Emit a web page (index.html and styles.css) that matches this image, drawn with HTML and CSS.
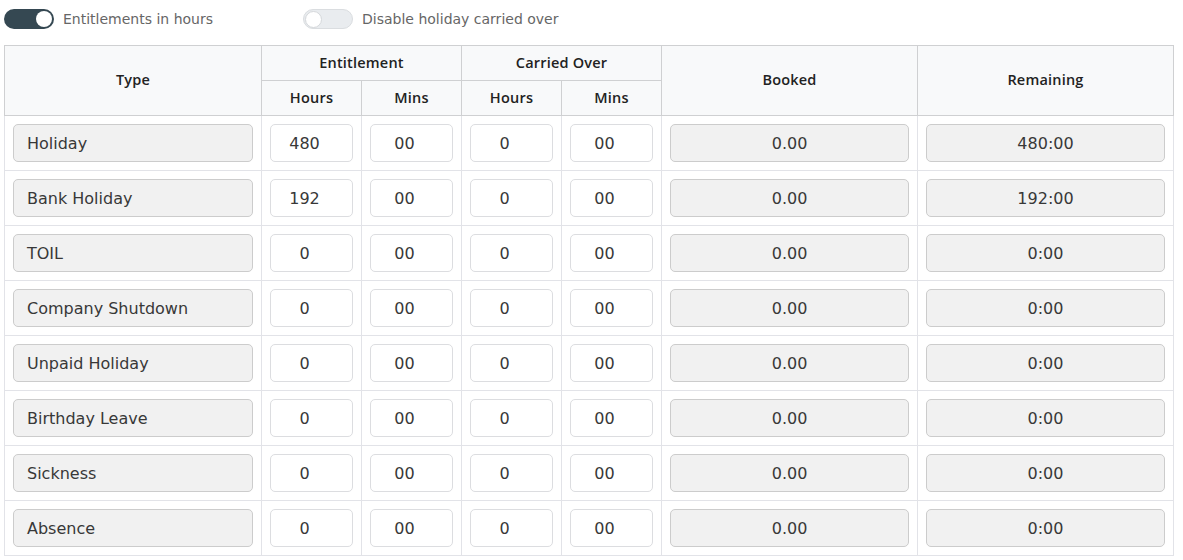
FILE: index.html
```html
<!DOCTYPE html>
<html>
<head>
<meta charset="utf-8">
<link rel="stylesheet" href="styles.css">
</head>
<body>
<div class="page">
  <div class="toggles">
    <label class="toggle-item">
      <span class="switch on"><span class="knob"></span></span>
      <span class="toggle-label">Entitlements in hours</span>
    </label>
    <label class="toggle-item second">
      <span class="switch off"><span class="knob"></span></span>
      <span class="toggle-label">Disable holiday carried over</span>
    </label>
  </div>
  <table class="ent">
    <colgroup>
      <col class="c-type"><col class="c-num"><col class="c-num"><col class="c-num"><col class="c-num"><col class="c-wide"><col class="c-wide">
    </colgroup>
    <thead>
      <tr class="h1">
        <th rowspan="2">Type</th>
        <th colspan="2">Entitlement</th>
        <th colspan="2">Carried Over</th>
        <th rowspan="2">Booked</th>
        <th rowspan="2">Remaining</th>
      </tr>
      <tr class="h2">
        <th>Hours</th><th>Mins</th><th>Hours</th><th>Mins</th>
      </tr>
    </thead>
    <tbody>
      <tr><td><div class="field ro left">Holiday</div></td><td><div class="field num">480</div></td><td><div class="field num">00</div></td><td><div class="field num">0</div></td><td><div class="field num">00</div></td><td><div class="field ro">0.00</div></td><td><div class="field ro">480:00</div></td></tr>
      <tr><td><div class="field ro left">Bank Holiday</div></td><td><div class="field num">192</div></td><td><div class="field num">00</div></td><td><div class="field num">0</div></td><td><div class="field num">00</div></td><td><div class="field ro">0.00</div></td><td><div class="field ro">192:00</div></td></tr>
      <tr><td><div class="field ro left">TOIL</div></td><td><div class="field num">0</div></td><td><div class="field num">00</div></td><td><div class="field num">0</div></td><td><div class="field num">00</div></td><td><div class="field ro">0.00</div></td><td><div class="field ro">0:00</div></td></tr>
      <tr><td><div class="field ro left">Company Shutdown</div></td><td><div class="field num">0</div></td><td><div class="field num">00</div></td><td><div class="field num">0</div></td><td><div class="field num">00</div></td><td><div class="field ro">0.00</div></td><td><div class="field ro">0:00</div></td></tr>
      <tr><td><div class="field ro left">Unpaid Holiday</div></td><td><div class="field num">0</div></td><td><div class="field num">00</div></td><td><div class="field num">0</div></td><td><div class="field num">00</div></td><td><div class="field ro">0.00</div></td><td><div class="field ro">0:00</div></td></tr>
      <tr><td><div class="field ro left">Birthday Leave</div></td><td><div class="field num">0</div></td><td><div class="field num">00</div></td><td><div class="field num">0</div></td><td><div class="field num">00</div></td><td><div class="field ro">0.00</div></td><td><div class="field ro">0:00</div></td></tr>
      <tr><td><div class="field ro left">Sickness</div></td><td><div class="field num">0</div></td><td><div class="field num">00</div></td><td><div class="field num">0</div></td><td><div class="field num">00</div></td><td><div class="field ro">0.00</div></td><td><div class="field ro">0:00</div></td></tr>
      <tr><td><div class="field ro left">Absence</div></td><td><div class="field num">0</div></td><td><div class="field num">00</div></td><td><div class="field num">0</div></td><td><div class="field num">00</div></td><td><div class="field ro">0.00</div></td><td><div class="field ro">0:00</div></td></tr>
    </tbody>
  </table>
</div>
</body>
</html>
```
FILE: styles.css
```css
* { box-sizing: border-box; }
html, body { margin: 0; padding: 0; background: #fff; }
body { font-family: "DejaVu Sans", "Noto Sans", sans-serif; color: #333; }
.page { padding: 9px 4px 0 4px; }
.toggles { display: flex; align-items: center; height: 20px; }
.toggle-item { display: flex; align-items: center; gap: 9px; }
.toggle-item.second { margin-left: 90px; }
.switch { width: 50px; height: 20px; border-radius: 10px; display: flex; align-items: center; padding: 2px; }
.switch.on { background: #354852; justify-content: flex-end; }
.switch.off { background: #e9ecef; border: 1px solid #dadde0; justify-content: flex-start; padding: 1px; }
.knob { width: 16px; height: 16px; border-radius: 50%; background: #fff; }
.switch.off .knob { width: 17px; height: 17px; border: 1px solid #d5d8db; }
.toggle-label { font-size: 14px; color: #666; }
.ent { margin-top: 16px; width: 1169px; border-collapse: collapse; table-layout: fixed; }
.c-type { width: 257px; }
.c-num { width: 100px; }
.c-wide { width: 256px; }
.ent th { background: #f8f9fa; border: 1px solid #cfd0d2; font-family: "Open Sans", "DejaVu Sans", sans-serif; font-size: 14.5px; font-weight: 600; letter-spacing: 0.2px; color: #222; height: 35px; padding: 0 0 2px 0; }
.ent td { border: 1px solid #e2e3e8; padding: 8px; height: 55px; }
.field { height: 38px; border: 1px solid #dcdde0; border-radius: 5px; background: #fff; display: flex; align-items: center; justify-content: center; font-size: 16px; color: #383838; }
.field.num { padding-right: 14px; }
.field.ro { background: #f1f1f1; border-color: #ccc; }
.field.left { justify-content: flex-start; padding-left: 13px; }
```
